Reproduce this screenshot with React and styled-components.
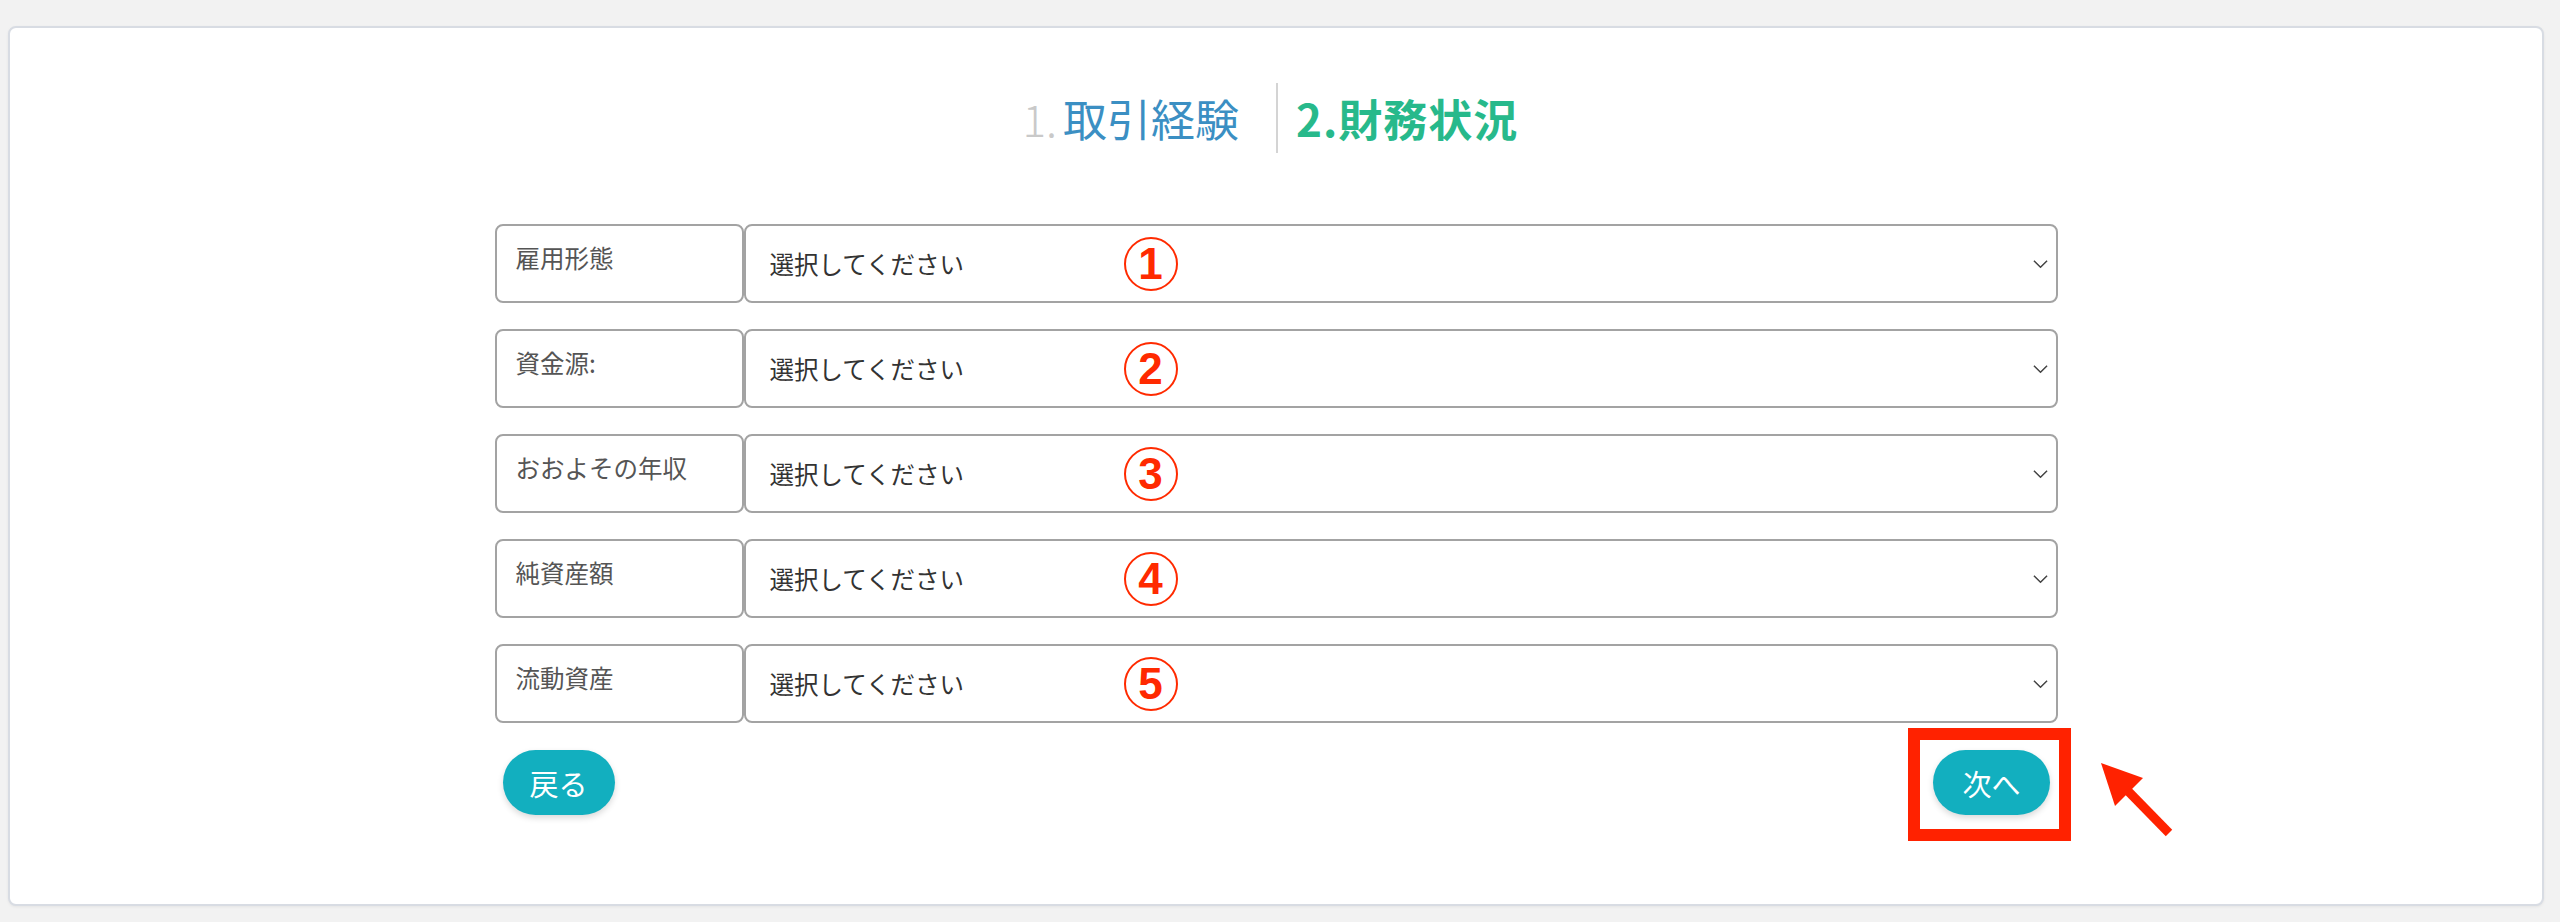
import styled, { createGlobalStyle } from "styled-components";

const GlobalStyle = createGlobalStyle`
  html, body {
    margin: 0;
    padding: 0;
    background: #f2f2f2;
  }
  body {
    font-family: "Noto Sans CJK JP", "Noto Sans", sans-serif;
  }
  * {
    box-sizing: border-box;
  }
`;

const fields = [
  { label: "雇用形態", mark: "1" },
  { label: "資金源:", mark: "2" },
  { label: "おおよその年収", mark: "3" },
  { label: "純資産額", mark: "4" },
  { label: "流動資産", mark: "5" },
];

export default function App() {
  return (
    <>
      <GlobalStyle />
      <Card>
        <Steps>
          <Step>
            <StepNo>1.</StepNo>
            <StepName>取引経験</StepName>
          </Step>
          <Step $current>
            <StepName $current>2.財務状況</StepName>
          </Step>
        </Steps>

        <Form>
          {fields.map(({ label, mark }) => (
            <Row key={label}>
              <Label>{label}</Label>
              <Select>
                <span>選択してください</span>
                <Marker>{mark}</Marker>
                <Chevron viewBox="0 0 16 9">
                  <polyline points="1,1 8,8 15,1" />
                </Chevron>
              </Select>
            </Row>
          ))}

          <Actions>
            <Button>戻る</Button>
            <Highlight>
              <Button $wide>次へ</Button>
              <Frame />
              <Arrow viewBox="0 0 80 80">
                <polygon points="5,5 47,20 19,48" />
                <line x1="30" y1="31" x2="73" y2="75" />
              </Arrow>
            </Highlight>
          </Actions>
        </Form>
      </Card>
    </>
  );
}

const Card = styled.div`
  margin: 26px 16px 16px 8px;
  height: 880px;
  background: #fff;
  border: 2px solid #d8dce3;
  border-radius: 8px;
  box-shadow: 0 1px 3px rgba(0, 0, 0, 0.06);
  padding-top: 55px;
`;

const Steps = styled.div`
  display: grid;
  grid-template-columns: 1fr 1fr;
  height: 70px;
`;

const Step = styled.div`
  display: flex;
  align-items: center;
  justify-content: ${({ $current }) => ($current ? "flex-start" : "flex-end")};
  padding: ${({ $current }) => ($current ? "0 0 0 18px" : "0 37px 0 0")};
  border-left: ${({ $current }) => ($current ? "2px solid #d4d4d4" : "none")};
  font-size: 44px;
  line-height: 1;
`;

const StepNo = styled.span`
  color: #c9c9c9;
  font-weight: 300;
  margin-right: 6px;
`;

const StepName = styled.span`
  color: ${({ $current }) => ($current ? "#27b98b" : "#3b8fc3")};
  font-weight: ${({ $current }) => ($current ? 700 : 400)};
  letter-spacing: ${({ $current }) => ($current ? "1px" : "0")};
`;

const Form = styled.div`
  width: 1563px;
  margin: 71px auto 0;
  display: flex;
  flex-direction: column;
  gap: 26px;
`;

const Row = styled.div`
  display: flex;
  height: 79px;
`;

const Label = styled.div`
  width: 249px;
  flex-shrink: 0;
  border: 2px solid #a3a3a3;
  border-radius: 8px;
  padding: 14px 0 0 19px;
  font-size: 24.5px;
  color: #555;
`;

const Select = styled.div`
  position: relative;
  flex: 1;
  display: flex;
  align-items: center;
  border: 2px solid #a3a3a3;
  border-radius: 8px;
  padding: 0 0 0 24px;
  font-size: 24.5px;
  color: #333;
`;

const Marker = styled.span`
  position: absolute;
  left: 378px;
  top: 50%;
  transform: translateY(-50%);
  width: 54px;
  height: 54px;
  border: 2.5px solid #ff2a00;
  border-radius: 50%;
  display: flex;
  align-items: center;
  justify-content: center;
  font-family: "Liberation Sans", Arial, sans-serif;
  font-weight: 700;
  font-size: 44px;
  color: #ff2a00;
`;

const Chevron = styled.svg`
  position: absolute;
  right: 8px;
  top: 50%;
  width: 15px;
  height: 9px;
  transform: translateY(-50%);
  fill: none;
  stroke: #444;
  stroke-width: 1.6;
`;

const Actions = styled.div`
  display: flex;
  justify-content: space-between;
  padding: 1px 8px 0;
`;

const Button = styled.button`
  height: 65px;
  padding: 0 ${({ $wide }) => ($wide ? "29px" : "27px")};
  border: none;
  border-radius: 33px;
  background: #12afbf;
  color: #fff;
  font-family: "Noto Sans CJK JP", sans-serif;
  font-size: 29px;
  box-shadow: 0 3px 6px rgba(0, 0, 0, 0.15);
  cursor: pointer;
`;

const Highlight = styled.div`
  position: relative;
  display: flex;
`;

const Frame = styled.div`
  position: absolute;
  inset: -22px -21px -26px -25px;
  border: 12px solid #ff2200;
  pointer-events: none;
`;

const Arrow = styled.svg`
  position: absolute;
  left: 163px;
  top: 8px;
  width: 80px;
  height: 80px;
  overflow: visible;
  polygon {
    fill: #ff2200;
  }
  line {
    stroke: #ff2200;
    stroke-width: 9;
  }
`;
